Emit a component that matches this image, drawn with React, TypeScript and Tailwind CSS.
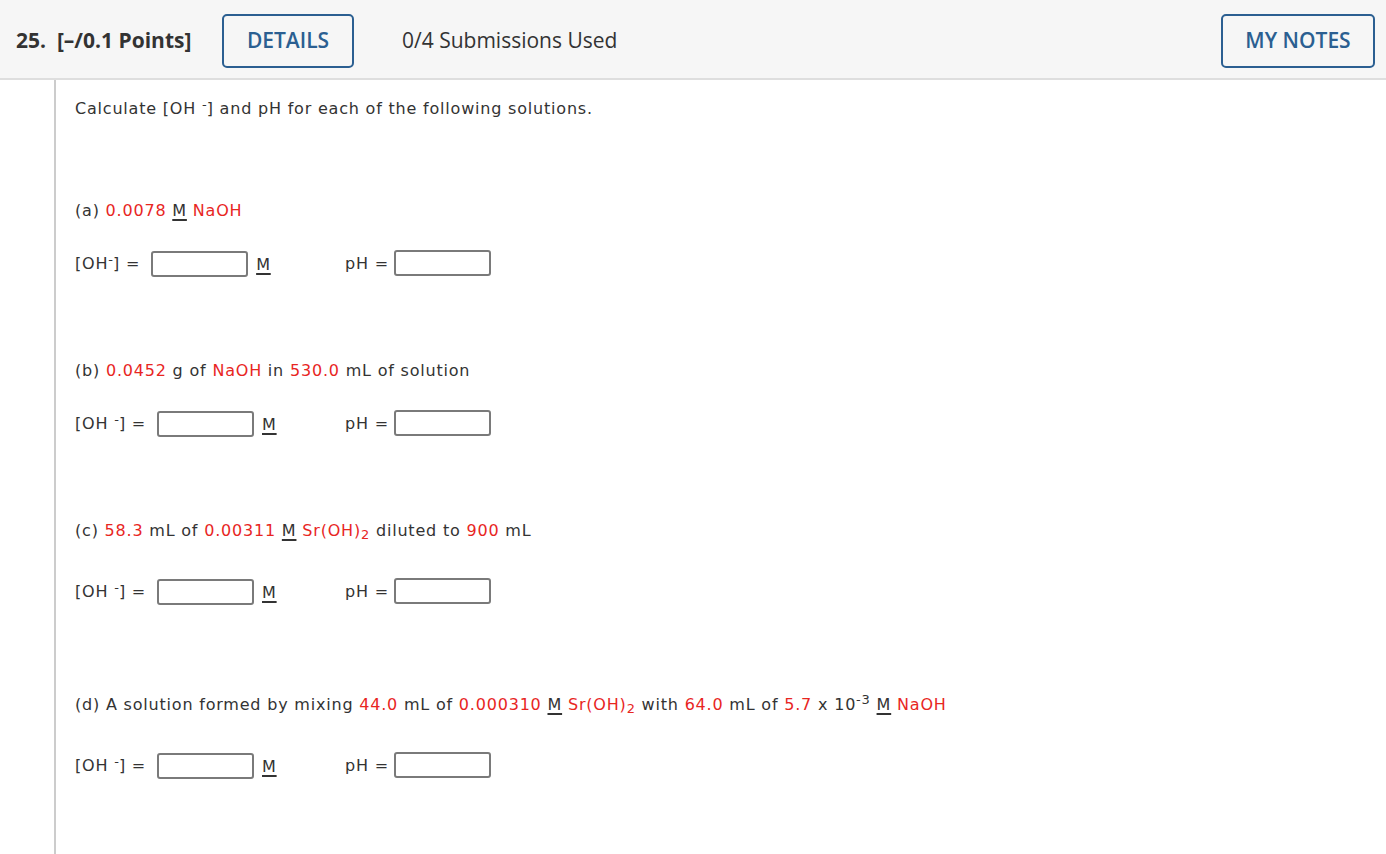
import React from 'react';

const red = 'text-[#e8261f]';

function Box() {
  return <span className="inline-block w-[97px] h-[26px] border-2 border-[#7a7a7a] rounded-[3px] bg-white align-middle" />;
}

function U() {
  return <span className="text-[#333] underline underline-offset-[3px] decoration-[1.5px]">M</span>;
}

function Minus() {
  return <sup className="text-[13px] leading-none relative -top-[5px] tracking-normal">-</sup>;
}

function AnswerRow({ tight, gap }: { tight?: boolean; gap: string }) {
  return (
    <div className={`flex items-center ${gap}`}>
      <div className="w-[270px] flex items-center">
        <span>[OH{tight ? '' : ' '}<Minus />] =</span>
        <span className="ml-[11px]"><Box /></span>
        <span className="ml-[8px] mt-[2px]"><U /></span>
      </div>
      <span>pH =</span>
      <span className="ml-[5px] -mt-[2px]"><Box /></span>
    </div>
  );
}

export default function App() {
  return (
    <div className="w-[1386px] h-[854px] bg-white overflow-hidden text-[#333]">
      <div className="h-[80px] pt-[3px] bg-[#f6f6f6] border-b-2 border-[#dedede] flex items-center px-[16px] font-['Open_Sans',sans-serif]">
        <span className="w-[206px] text-[21px] font-bold text-[#333]">25.&nbsp; [–/0.1 Points]</span>
        <button className="w-[132px] h-[54px] border-2 border-[#2b5f91] rounded-[5px] text-[#2b5f91] text-[21px] font-semibold">DETAILS</button>
        <span className="ml-[48px] text-[21px] text-[#333]">0/4 Submissions Used</span>
        <button className="ml-auto mr-[-5px] w-[154px] h-[54px] border-2 border-[#2b5f91] rounded-[5px] text-[#2b5f91] text-[21px] font-semibold">MY NOTES</button>
      </div>
      <div className="flex h-full font-['DejaVu_Sans',Verdana,sans-serif]">
        <div className="w-[54px] shrink-0" />
        <div className="w-[2px] bg-[#cccccc] h-full shrink-0" />
        <div className="pl-[19px] pt-[19px] text-[16px] leading-[20px] tracking-[0.8px]">
          <div>Calculate [OH <Minus />] and pH for each of the following solutions.</div>

          <div className="mt-[82px]">(a) <span className={red}>0.0078</span> <U /> <span className={red}>NaOH</span></div>
          <AnswerRow tight gap="mt-[30px]" />

          <div className="mt-[84px]">(b) <span className={red}>0.0452</span> g of <span className={red}>NaOH</span> in <span className={red}>530.0</span> mL of solution</div>
          <AnswerRow gap="mt-[30px]" />

          <div className="mt-[84px]">(c) <span className={red}>58.3</span> mL of <span className={red}>0.00311</span> <U /> <span className={red}>Sr(OH)<sub className="text-[13px] leading-none">2</sub></span> diluted to <span className={red}>900</span> mL</div>
          <AnswerRow gap="mt-[38px]" />

          <div className="mt-[90px]">(d) A solution formed by mixing <span className={red}>44.0</span> mL of <span className={red}>0.000310</span> <U /> <span className={red}>Sr(OH)<sub className="text-[13px] leading-none">2</sub></span> with <span className={red}>64.0</span> mL of <span className={red}>5.7</span> x 10<sup className="text-[13px] leading-none">-3</sup> <U /> <span className={red}>NaOH</span></div>
          <AnswerRow gap="mt-[38px]" />
        </div>
      </div>
    </div>
  );
}
